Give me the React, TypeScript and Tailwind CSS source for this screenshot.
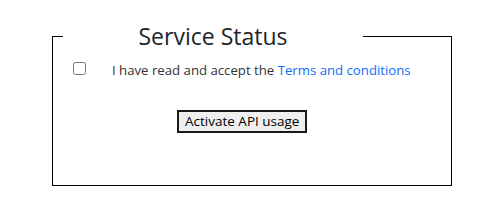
export default function App() {
  return (
    <div className="min-h-screen bg-white pl-[52px] pt-[22px] font-['Open_Sans',sans-serif] text-[#212529]">
      <fieldset className="h-[164px] w-[400px] border border-black px-[10px]">
        <legend className="w-[300px]">
          <span className="block text-center text-[23px] leading-[28px]">Service Status</span>
        </legend>
        <div className="mt-[10px] flex items-start">
          <input type="checkbox" className="ml-[10px] mt-[2px] h-[13px] w-[13px]" />
          <span className="ml-[26px] text-[13.2px] leading-[20px] text-[#333]">
            I have read and accept the <a className="text-[#0d6efd]">Terms and conditions</a>
          </span>
        </div>
        <div className="mt-[28px] pl-[114px]">
          <button
            type="button"
            className="h-[23px] border-2 border-[#1a1a1a] bg-[#efefef] px-[6px] text-[13.5px] leading-[17px] text-black"
          >
            Activate API usage
          </button>
        </div>
      </fieldset>
    </div>
  );
}
